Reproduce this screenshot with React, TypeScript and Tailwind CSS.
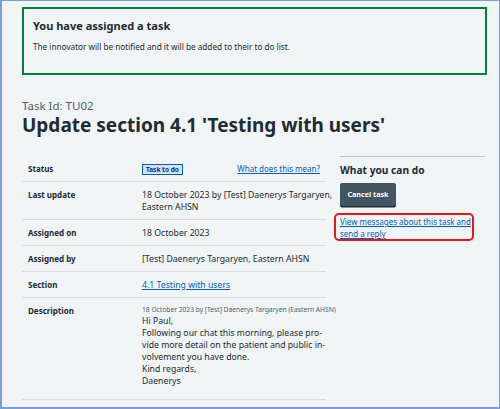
import React from "react";

function Row({ label, children }: { label: string; children: React.ReactNode }) {
  return (
    <div className="flex border-b border-[#d8dde0] pt-[7px] pb-[6px] px-[6px]">
      <div className="w-[114px] shrink-0 font-bold text-[8px] leading-[12px] text-[#212b32]">{label}</div>
      <div className="flex-1 min-w-0 text-[8.7px] leading-[12px] text-[#212b32] whitespace-nowrap">{children}</div>
    </div>
  );
}

export default function App() {
  return (
    <div
      className="w-[500px] h-[409px] overflow-hidden bg-[#f0f4f5] border-[2px] border-t-[1px] border-r-[1.5px] border-[#7b9edb] text-[#212b32]"
      style={{ fontFamily: "'Noto Sans', 'Open Sans', sans-serif" }}
    >
      <div className="pl-[20px] pr-[12px] pt-[6px]">
        {/* success banner */}
        <div className="h-[68px] w-[465px] border-[2px] border-[#007f3b] bg-[#f0f4f5] px-[9px] pt-[9px]">
          <h2 className="text-[11px] leading-[16px] font-bold text-[#212b32]">You have assigned a task</h2>
          <p className="mt-[8px] text-[8.2px] leading-[10px] text-[#212b32]">
            The innovator will be notified and it will be added to their to do list.
          </p>
        </div>

        <div className="mt-[24px] text-[11.5px] leading-[14px] text-[#4c6272]">Task Id: TU02</div>
        <h1 className="text-[19px] leading-[22px] font-bold text-[#212b32] mt-[1px]">
          Update section 4.1 'Testing with users'
        </h1>

        <div className="flex mt-[20px]">
          {/* summary list */}
          <div className="w-[304px]">
            <Row label="Status">
              <div className="flex items-center justify-between h-[12px]">
                <span className="border border-[#005eb8] bg-[#d2e2f1] text-[#003087] font-bold text-[6.5px] leading-[9px] px-[3px]">
                  Task to do
                </span>
                <a href="#" className="text-[#005eb8] underline text-[8px]">What does this mean?</a>
              </div>
            </Row>
            <Row label="Last update">
              18 October 2023 by [Test] Daenerys Targaryen,
              <br />
              Eastern AHSN
            </Row>
            <Row label="Assigned on">18 October 2023</Row>
            <Row label="Assigned by">[Test] Daenerys Targaryen, Eastern AHSN</Row>
            <Row label="Section">
              <a href="#" className="text-[#005eb8] underline">4.1 Testing with users</a>
            </Row>
            <div className="flex border-b border-[#d8dde0] pt-[7px] pb-[12px] px-[6px]">
              <div className="w-[114px] shrink-0 font-bold text-[8px] leading-[12px]">Description</div>
              <div className="flex-1 whitespace-nowrap">
                <div className="text-[6.7px] leading-[10px] text-[#4c6272]">
                  18 October 2023 by [Test] Daenerys Targaryen (Eastern AHSN)
                </div>
                <div className="text-[8.7px] leading-[12px]">
                  Hi Paul,
                  <br />
                  Following our chat this morning, please pro-
                  <br />
                  vide more detail on the patient and public in-
                  <br />
                  volvement you have done.
                  <br />
                  Kind regards,
                  <br />
                  Daenerys
                </div>
              </div>
            </div>
          </div>

          {/* actions */}
          <div className="ml-[14px] w-[145px]">
            <div className="border-t-[1.5px] border-[#aec4e6] pt-[6px]">
              <h3 className="text-[10.2px] leading-[14px] font-bold">What you can do</h3>
              <button className="mt-[6px] h-[23px] w-[56px] bg-[#425563] text-white font-bold text-[7.2px] rounded-[2px] shadow-[0_1.5px_0_#212b32]">
                Cancel task
              </button>
              <div className="mt-[7px] -ml-[6px] w-[140px] h-[28px] border-[2px] border-[#e5161c] rounded-[5px] pl-[4px] pt-[1px]">
                <a href="#" className="text-[#005eb8] underline text-[8px] leading-[12px] block whitespace-nowrap">
                  View messages about this task and
                  <br />
                  send a reply
                </a>
              </div>
            </div>
          </div>
        </div>
      </div>
    </div>
  );
}
